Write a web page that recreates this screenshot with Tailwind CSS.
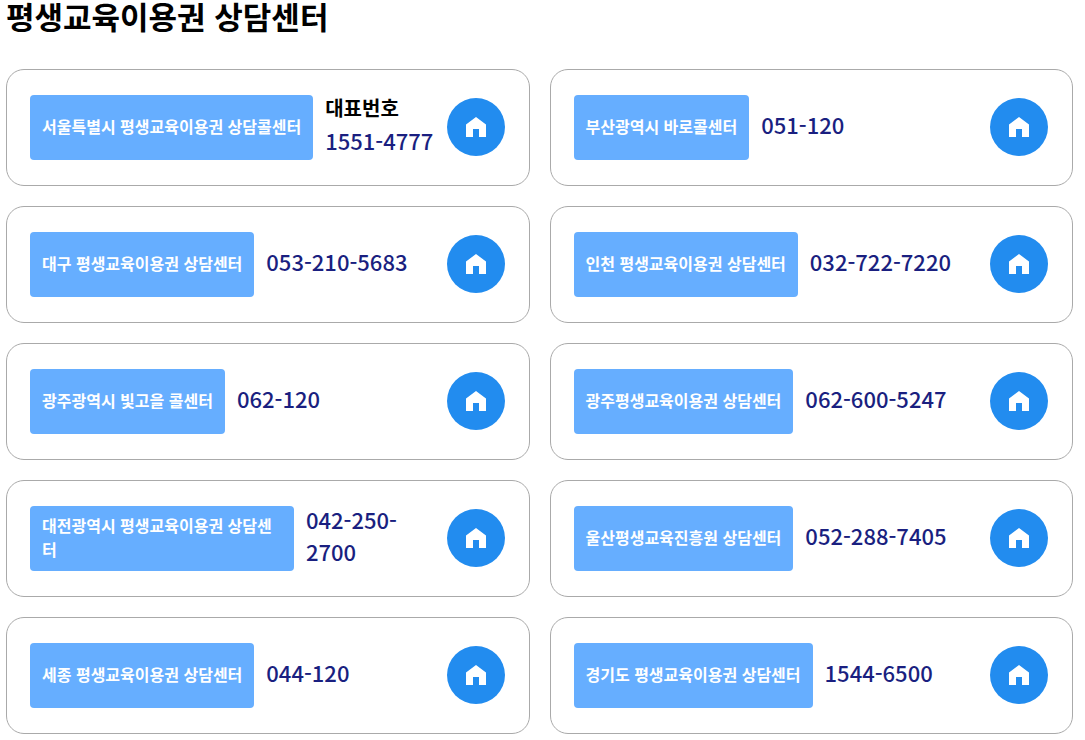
<!DOCTYPE html>
<html lang="ko">
<head>
<meta charset="utf-8">
<meta name="viewport" content="width=device-width, initial-scale=1">
<title>평생교육이용권 상담센터</title>
<script src="https://cdn.jsdelivr.net/npm/@tailwindcss/browser@4"></script>
</head>
<body class="bg-white pr-3 pb-1.5 pl-1.5 font-['Noto_Sans_CJK_KR',sans-serif] text-black">
<svg class="hidden" aria-hidden="true"><symbol id="home" viewBox="0 0 20 20"><path d="M10 0 20 7.5V20H13V12H7V20H0V7.5Z" fill="currentColor"/></symbol></svg>
<main>
<h1 class="text-[31px] leading-8 font-bold">평생교육이용권 상담센터</h1>
<ul class="mt-[37px] grid grid-cols-2 gap-5">
<li class="flex min-h-[117px] items-center rounded-[18px] border border-[#aaa] pr-6 pl-[23px]"><strong class="flex min-h-[65px] shrink-0 items-center rounded bg-[#66aeff] px-3 pb-1 text-base font-bold text-white">서울특별시 평생교육이용권 상담콜센터</strong><p class="ml-3 flex-1 pb-2 text-[22px] leading-8 font-medium text-[#1a1f80]"><span class="block text-xl leading-8 font-bold text-black">대표번호</span>1551-4777</p><a href="#" aria-label="서울특별시 홈페이지" class="mb-0.5 grid size-[58px] shrink-0 place-items-center rounded-full bg-[#228cef] text-white"><svg class="size-5"><use href="#home"/></svg></a></li>
<li class="flex min-h-[117px] items-center rounded-[18px] border border-[#aaa] pr-6 pl-[23px]"><strong class="flex min-h-[65px] shrink-0 items-center rounded bg-[#66aeff] px-3 pb-1 text-base font-bold text-white">부산광역시 바로콜센터</strong><p class="ml-3 flex-1 pb-2 text-[22px] leading-8 font-medium text-[#1a1f80]">051-120</p><a href="#" aria-label="부산광역시 홈페이지" class="mb-0.5 grid size-[58px] shrink-0 place-items-center rounded-full bg-[#228cef] text-white"><svg class="size-5"><use href="#home"/></svg></a></li>
<li class="flex min-h-[117px] items-center rounded-[18px] border border-[#aaa] pr-6 pl-[23px]"><strong class="flex min-h-[65px] shrink-0 items-center rounded bg-[#66aeff] px-3 pb-1 text-base font-bold text-white">대구 평생교육이용권 상담센터</strong><p class="ml-3 flex-1 pb-2 text-[22px] leading-8 font-medium text-[#1a1f80]">053-210-5683</p><a href="#" aria-label="대구 홈페이지" class="mb-0.5 grid size-[58px] shrink-0 place-items-center rounded-full bg-[#228cef] text-white"><svg class="size-5"><use href="#home"/></svg></a></li>
<li class="flex min-h-[117px] items-center rounded-[18px] border border-[#aaa] pr-6 pl-[23px]"><strong class="flex min-h-[65px] shrink-0 items-center rounded bg-[#66aeff] px-3 pb-1 text-base font-bold text-white">인천 평생교육이용권 상담센터</strong><p class="ml-3 flex-1 pb-2 text-[22px] leading-8 font-medium text-[#1a1f80]">032-722-7220</p><a href="#" aria-label="인천 홈페이지" class="mb-0.5 grid size-[58px] shrink-0 place-items-center rounded-full bg-[#228cef] text-white"><svg class="size-5"><use href="#home"/></svg></a></li>
<li class="flex min-h-[117px] items-center rounded-[18px] border border-[#aaa] pr-6 pl-[23px]"><strong class="flex min-h-[65px] shrink-0 items-center rounded bg-[#66aeff] px-3 pb-1 text-base font-bold text-white">광주광역시 빛고을 콜센터</strong><p class="ml-3 flex-1 pb-2 text-[22px] leading-8 font-medium text-[#1a1f80]">062-120</p><a href="#" aria-label="광주광역시 홈페이지" class="mb-0.5 grid size-[58px] shrink-0 place-items-center rounded-full bg-[#228cef] text-white"><svg class="size-5"><use href="#home"/></svg></a></li>
<li class="flex min-h-[117px] items-center rounded-[18px] border border-[#aaa] pr-6 pl-[23px]"><strong class="flex min-h-[65px] shrink-0 items-center rounded bg-[#66aeff] px-3 pb-1 text-base font-bold text-white">광주평생교육이용권 상담센터</strong><p class="ml-3 flex-1 pb-2 text-[22px] leading-8 font-medium text-[#1a1f80]">062-600-5247</p><a href="#" aria-label="광주평생교육이용권 홈페이지" class="mb-0.5 grid size-[58px] shrink-0 place-items-center rounded-full bg-[#228cef] text-white"><svg class="size-5"><use href="#home"/></svg></a></li>
<li class="flex min-h-[117px] items-center rounded-[18px] border border-[#aaa] pr-6 pl-[23px]"><strong class="flex min-h-[65px] max-w-[264px] shrink-0 items-center rounded bg-[#66aeff] px-3 pb-1 text-base font-bold text-white">대전광역시 평생교육이용권 상담센터</strong><p class="ml-3 flex-1 pb-2 text-[22px] leading-8 font-medium text-[#1a1f80]">042-250-2700</p><a href="#" aria-label="대전광역시 홈페이지" class="mb-0.5 grid size-[58px] shrink-0 place-items-center rounded-full bg-[#228cef] text-white"><svg class="size-5"><use href="#home"/></svg></a></li>
<li class="flex min-h-[117px] items-center rounded-[18px] border border-[#aaa] pr-6 pl-[23px]"><strong class="flex min-h-[65px] shrink-0 items-center rounded bg-[#66aeff] px-3 pb-1 text-base font-bold text-white">울산평생교육진흥원 상담센터</strong><p class="ml-3 flex-1 pb-2 text-[22px] leading-8 font-medium text-[#1a1f80]">052-288-7405</p><a href="#" aria-label="울산 홈페이지" class="mb-0.5 grid size-[58px] shrink-0 place-items-center rounded-full bg-[#228cef] text-white"><svg class="size-5"><use href="#home"/></svg></a></li>
<li class="flex min-h-[117px] items-center rounded-[18px] border border-[#aaa] pr-6 pl-[23px]"><strong class="flex min-h-[65px] shrink-0 items-center rounded bg-[#66aeff] px-3 pb-1 text-base font-bold text-white">세종 평생교육이용권 상담센터</strong><p class="ml-3 flex-1 pb-2 text-[22px] leading-8 font-medium text-[#1a1f80]">044-120</p><a href="#" aria-label="세종 홈페이지" class="mb-0.5 grid size-[58px] shrink-0 place-items-center rounded-full bg-[#228cef] text-white"><svg class="size-5"><use href="#home"/></svg></a></li>
<li class="flex min-h-[117px] items-center rounded-[18px] border border-[#aaa] pr-6 pl-[23px]"><strong class="flex min-h-[65px] shrink-0 items-center rounded bg-[#66aeff] px-3 pb-1 text-base font-bold text-white">경기도 평생교육이용권 상담센터</strong><p class="ml-3 flex-1 pb-2 text-[22px] leading-8 font-medium text-[#1a1f80]">1544-6500</p><a href="#" aria-label="경기도 홈페이지" class="mb-0.5 grid size-[58px] shrink-0 place-items-center rounded-full bg-[#228cef] text-white"><svg class="size-5"><use href="#home"/></svg></a></li>
</ul>
</main>
</body>
</html>
